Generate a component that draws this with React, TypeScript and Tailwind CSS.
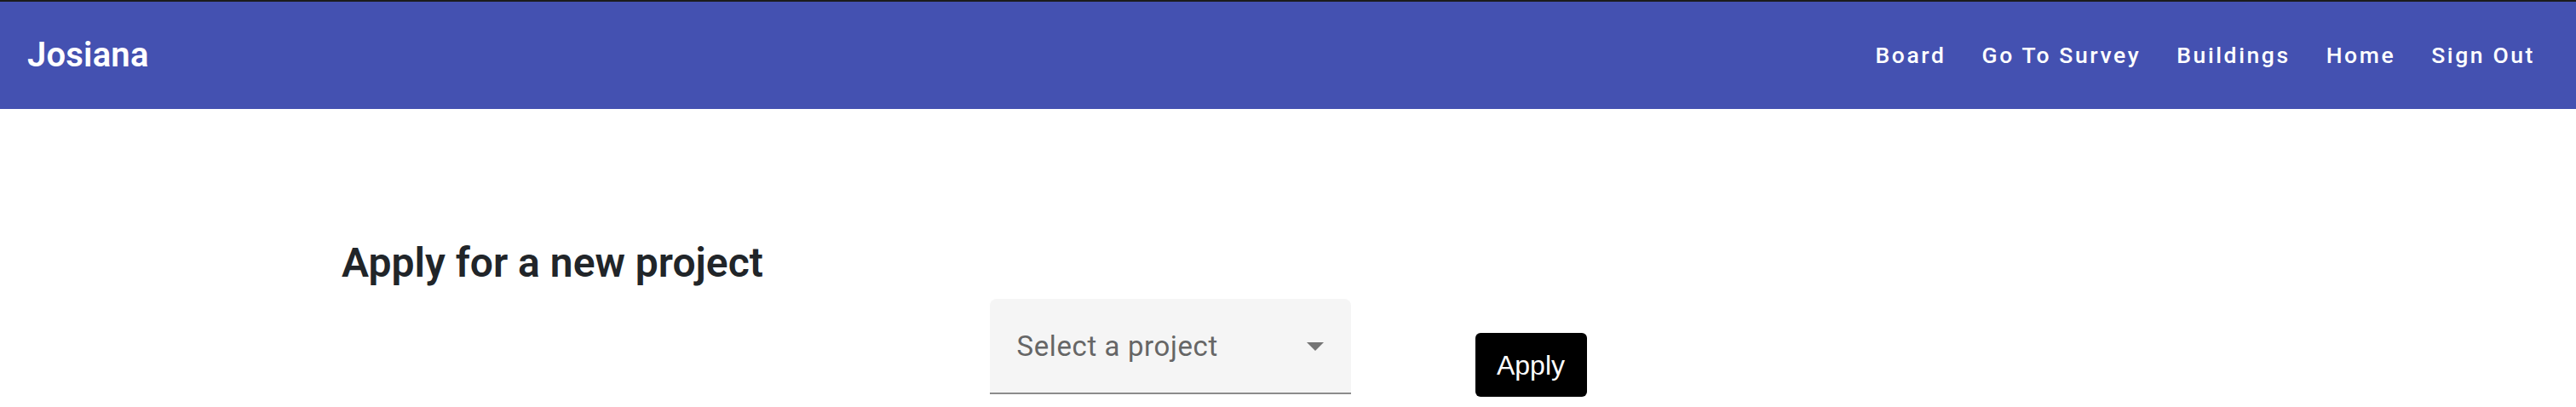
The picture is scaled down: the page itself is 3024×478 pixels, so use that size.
import { useState } from 'react';

const navLinks = ['Board', 'Go To Survey', 'Buildings', 'Home', 'Sign Out'];

function ArrowDropDown() {
    return (
        <svg viewBox="0 0 24 24" className="w-[48px] h-[48px] fill-[#757575]">
            <path d="M7 10l5 5 5-5z" />
        </svg>
    );
}

export default function App() {
    const [project, setProject] = useState('');

    return (
        <div className="min-h-[478px] bg-white font-['Roboto',sans-serif]">
            <header className="border-t-2 border-[#1c1c1c] bg-[#4451b1] h-[128px] flex items-center justify-between pl-[32px] pr-[48px] text-white">
                <div className="text-[40px] font-semibold tracking-[0.2px]">Josiana</div>
                <nav className="flex items-center gap-[42px]">
                    {navLinks.map((link) => (
                        <button key={link} className="cursor-pointer text-[26.5px] font-medium tracking-[2.6px] text-white">
                            {link}
                        </button>
                    ))}
                </nav>
            </header>

            <main className="flex flex-col">
                <h2 className="pl-[401px] mt-[153px] text-[48px] leading-[56px] font-semibold text-[#212529]">
                    Apply for a new project
                </h2>
                <div className="flex justify-center items-start gap-[146px] mt-[14px]">
                    <div className="relative w-[424px] h-[112px] rounded-t-[8px] bg-[#f5f5f5] border-b-2 border-[#8c8c8c] flex items-center pl-[32px] pr-[18px] justify-between">
                        <span className="text-[33px] tracking-[0.6px] text-[#666666] leading-none">{project || 'Select a project'}</span>
                        <ArrowDropDown />
                    </div>
                    <button
                        className="mt-[40px] w-[131px] h-[75px] rounded-[6px] bg-black text-white text-[32px] font-['Liberation_Sans',Arial,sans-serif] flex items-center justify-center cursor-pointer"
                        onClick={() => setProject('')}
                    >
                        Apply
                    </button>
                </div>
            </main>
        </div>
    );
}
